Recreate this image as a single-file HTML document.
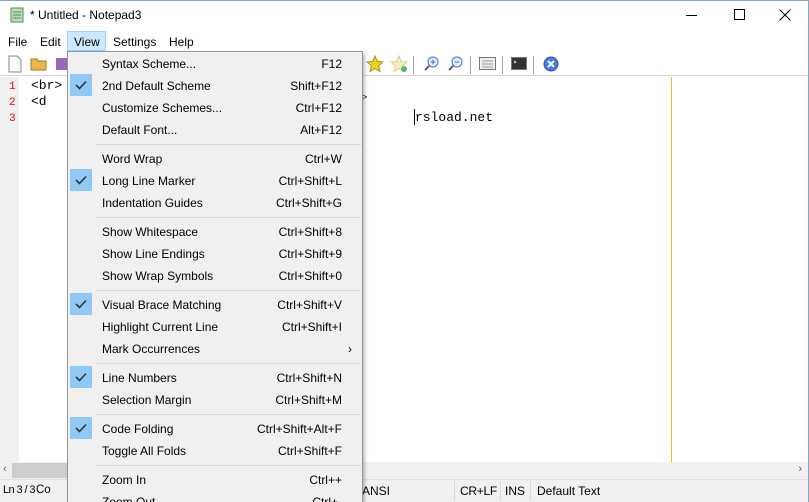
<!DOCTYPE html>
<html><head><style>
*{margin:0;padding:0;box-sizing:border-box}
html,body{width:809px;height:502px;overflow:hidden}
body{background:#fff;font-family:"Liberation Sans",sans-serif;font-size:12px;color:#000;position:relative}
.a{position:absolute}
.mono{font-family:"Liberation Mono",monospace;font-size:13px}
.mi{position:absolute;left:102px;height:22px;line-height:24px;width:240px}
.mi span{position:absolute;right:0}
.ck{position:absolute;left:70px;width:22px;height:22px;background:#90c8f6}
.ck svg{position:absolute;left:5px;top:6px}
.sep{position:absolute;left:96px;width:265px;height:1px;background:#d7d7d7}
.tsep{position:absolute;top:56px;width:1px;height:18px;background:#a0a0a0}
</style></head><body>
<div class="a" style="left:0;top:0;width:809px;height:1px;background:#7ea7c9"></div>
<div class="a" style="right:0;top:0;width:1px;height:502px;background:#7ea7c9"></div>
<svg class="a" style="left:9px;top:6px" width="16" height="18"><rect x="2" y="2" width="12" height="14" fill="#b8e0b8" stroke="#5a8a5a"/><line x1="4" y1="6" x2="12" y2="6" stroke="#5a8a5a"/><line x1="4" y1="9" x2="12" y2="9" stroke="#5a8a5a"/><line x1="4" y1="12" x2="12" y2="12" stroke="#5a8a5a"/></svg>
<div class="a" style="left:30px;top:8px;font-size:12px">* Untitled - Notepad3</div>
<div class="a" style="left:686px;top:15px;width:11px;height:1px;background:#000"></div>
<div class="a" style="left:734px;top:9px;width:11px;height:11px;border:1px solid #000"></div>
<svg class="a" style="left:779px;top:9px" width="12" height="12"><path d="M0.5 0.5L11.5 11.5M11.5 0.5L0.5 11.5" stroke="#000"/></svg>
<div class="a" style="left:8px;top:35px">File</div>
<div class="a" style="left:40px;top:35px">Edit</div>
<div class="a" style="left:67px;top:31px;width:39px;height:20px;background:#cce8ff;border:1px solid #99d1ff"></div>
<div class="a" style="left:74px;top:35px">View</div>
<div class="a" style="left:113px;top:35px">Settings</div>
<div class="a" style="left:169px;top:35px">Help</div>
<div class="a" style="left:0;top:51px;width:808px;height:25px;background:#fff;border-bottom:1px solid #d8d8d8"></div>
<svg class="a" style="left:8px;top:55px" width="14" height="18"><path d="M1 1H9L13 5V17H1Z" fill="#fafafa" stroke="#888"/></svg>
<svg class="a" style="left:30px;top:56px" width="18" height="15"><path d="M1 3H7L8 5H16V14H1Z" fill="#e8b84a" stroke="#a07820"/></svg>
<svg class="a" style="left:55px;top:57px" width="12" height="14"><rect x="1" y="1" width="11" height="12" fill="#9a6ab8"/></svg>
<svg class="a" style="left:366px;top:55px" width="18" height="18"><path d="M9 1L11.3 6.5 17 7 12.6 10.8 14 16.5 9 13.5 4 16.5 5.4 10.8 1 7 6.7 6.5Z" fill="#f0d020" stroke="#b09010"/></svg>
<svg class="a" style="left:390px;top:55px" width="18" height="18"><path d="M9 1L11.3 6.5 17 7 12.6 10.8 14 16.5 9 13.5 4 16.5 5.4 10.8 1 7 6.7 6.5Z" fill="#f4eec0" stroke="#d8cc90"/><circle cx="14" cy="14" r="3" fill="#5cb85c"/></svg>
<div class="tsep" style="left:413px"></div>
<svg class="a" style="left:423px;top:55px" width="17" height="17"><circle cx="10" cy="7" r="5" fill="#e8f2ff" stroke="#3a6fc0"/><path d="M6 11L2 15" stroke="#666" stroke-width="2"/><path d="M7.5 7H12.5M10 4.5V9.5" stroke="#3a6fc0"/></svg>
<svg class="a" style="left:447px;top:55px" width="17" height="17"><circle cx="10" cy="7" r="5" fill="#e8f2ff" stroke="#3a6fc0"/><path d="M6 11L2 15" stroke="#666" stroke-width="2"/><path d="M7.5 7H12.5" stroke="#3a6fc0"/></svg>
<div class="tsep" style="left:470px"></div>
<svg class="a" style="left:479px;top:57px" width="17" height="13"><rect x="0.5" y="0.5" width="16" height="12" fill="#eee" stroke="#777"/><path d="M3 4H14M3 7H14M3 10H14" stroke="#999"/></svg>
<div class="tsep" style="left:502px"></div>
<svg class="a" style="left:511px;top:57px" width="16" height="13"><rect x="0.5" y="0.5" width="15" height="12" fill="#333" stroke="#777"/><path d="M3 4L5 5 3 6" stroke="#ccc" fill="none"/></svg>
<div class="tsep" style="left:533px"></div>
<svg class="a" style="left:543px;top:56px" width="16" height="16"><circle cx="8" cy="8" r="7" fill="#4a7ae0" stroke="#2a50b0"/><path d="M5 5L11 11M11 5L5 11" stroke="#fff" stroke-width="2"/></svg>
<div class="a" style="left:0;top:77px;width:19px;height:385px;background:#f0f0f0"></div>
<div class="a mono" style="left:9px;top:79px;color:#e00;line-height:16px;font-size:11px">1<br>2<br>3</div>
<div class="a mono" style="left:31px;top:78px;line-height:16px">&lt;br&gt;<br>&lt;d</div>
<div class="a" style="left:671px;top:77px;width:1px;height:385px;background:#f0b830"></div>
<div class="a mono" style="left:362px;top:93px;font-size:9px;color:#000">&gt;</div>
<div class="a" style="left:414px;top:109px;width:1px;height:16px;background:#000"></div>
<div class="a mono" style="left:415px;top:110px">rsload.net</div>
<div class="a" style="left:0;top:462px;width:808px;height:17px;background:#f0f0f0"></div>
<div class="a" style="left:12px;top:463px;width:58px;height:15px;background:#cdcdcd"></div>
<div class="a" style="left:3px;top:463px;font-size:11px;color:#606060">‹</div>
<div class="a" style="left:512px;top:463px;width:290px;font-size:11px;color:#606060;text-align:right">›</div>
<div class="a" style="left:0;top:479px;width:808px;height:23px;background:#f0f0f0;border-top:1px solid #e0e0e0"></div>
<div class="a" style="left:3px;top:484px;font-size:11px;letter-spacing:-0.6px;white-space:nowrap">Ln 3 / 3</div>
<div class="a" style="left:36px;top:484px;font-size:11.5px">Co</div>
<div class="a" style="left:362px;top:484px">ANSI</div>
<div class="a" style="left:454px;top:481px;width:1px;height:20px;background:#d8d8d8"></div>
<div class="a" style="left:460px;top:484px;letter-spacing:-0.3px">CR+LF</div>
<div class="a" style="left:500px;top:481px;width:1px;height:20px;background:#d8d8d8"></div>
<div class="a" style="left:505px;top:484px">INS</div>
<div class="a" style="left:530px;top:481px;width:1px;height:20px;background:#d8d8d8"></div>
<div class="a" style="left:537px;top:484px">Default Text</div>
<div class="a" style="left:67px;top:51px;width:296px;height:460px;background:#f0f0f0;border:1px solid #979797;box-shadow:2px 2px 3px rgba(0,0,0,.25)"></div>
<div class="mi" style="top:52px">Syntax Scheme...<span>F12</span></div>
<div class="ck" style="top:74px"><svg width="12" height="10"><path d="M1 5L4.5 8.5 11 1.5" stroke="#333" stroke-width="1.6" fill="none"/></svg></div>
<div class="mi" style="top:74px">2nd Default Scheme<span>Shift+F12</span></div>
<div class="mi" style="top:96px">Customize Schemes...<span>Ctrl+F12</span></div>
<div class="mi" style="top:118px">Default Font...<span>Alt+F12</span></div>
<div class="sep" style="top:144px"></div>
<div class="mi" style="top:147px">Word Wrap<span>Ctrl+W</span></div>
<div class="ck" style="top:169px"><svg width="12" height="10"><path d="M1 5L4.5 8.5 11 1.5" stroke="#333" stroke-width="1.6" fill="none"/></svg></div>
<div class="mi" style="top:169px">Long Line Marker<span>Ctrl+Shift+L</span></div>
<div class="mi" style="top:191px">Indentation Guides<span>Ctrl+Shift+G</span></div>
<div class="sep" style="top:217px"></div>
<div class="mi" style="top:220px">Show Whitespace<span>Ctrl+Shift+8</span></div>
<div class="mi" style="top:242px">Show Line Endings<span>Ctrl+Shift+9</span></div>
<div class="mi" style="top:264px">Show Wrap Symbols<span>Ctrl+Shift+0</span></div>
<div class="sep" style="top:290px"></div>
<div class="ck" style="top:293px"><svg width="12" height="10"><path d="M1 5L4.5 8.5 11 1.5" stroke="#333" stroke-width="1.6" fill="none"/></svg></div>
<div class="mi" style="top:293px">Visual Brace Matching<span>Ctrl+Shift+V</span></div>
<div class="mi" style="top:315px">Highlight Current Line<span>Ctrl+Shift+I</span></div>
<div class="mi" style="top:337px">Mark Occurrences<span style="right:-10px">›</span></div>
<div class="sep" style="top:363px"></div>
<div class="ck" style="top:366px"><svg width="12" height="10"><path d="M1 5L4.5 8.5 11 1.5" stroke="#333" stroke-width="1.6" fill="none"/></svg></div>
<div class="mi" style="top:366px">Line Numbers<span>Ctrl+Shift+N</span></div>
<div class="mi" style="top:388px">Selection Margin<span>Ctrl+Shift+M</span></div>
<div class="sep" style="top:414px"></div>
<div class="ck" style="top:417px"><svg width="12" height="10"><path d="M1 5L4.5 8.5 11 1.5" stroke="#333" stroke-width="1.6" fill="none"/></svg></div>
<div class="mi" style="top:417px">Code Folding<span>Ctrl+Shift+Alt+F</span></div>
<div class="mi" style="top:439px">Toggle All Folds<span>Ctrl+Shift+F</span></div>
<div class="sep" style="top:465px"></div>
<div class="mi" style="top:468px">Zoom In<span>Ctrl++</span></div>
<div class="mi" style="top:490px">Zoom Out<span>Ctrl+-</span></div>
</body></html>
